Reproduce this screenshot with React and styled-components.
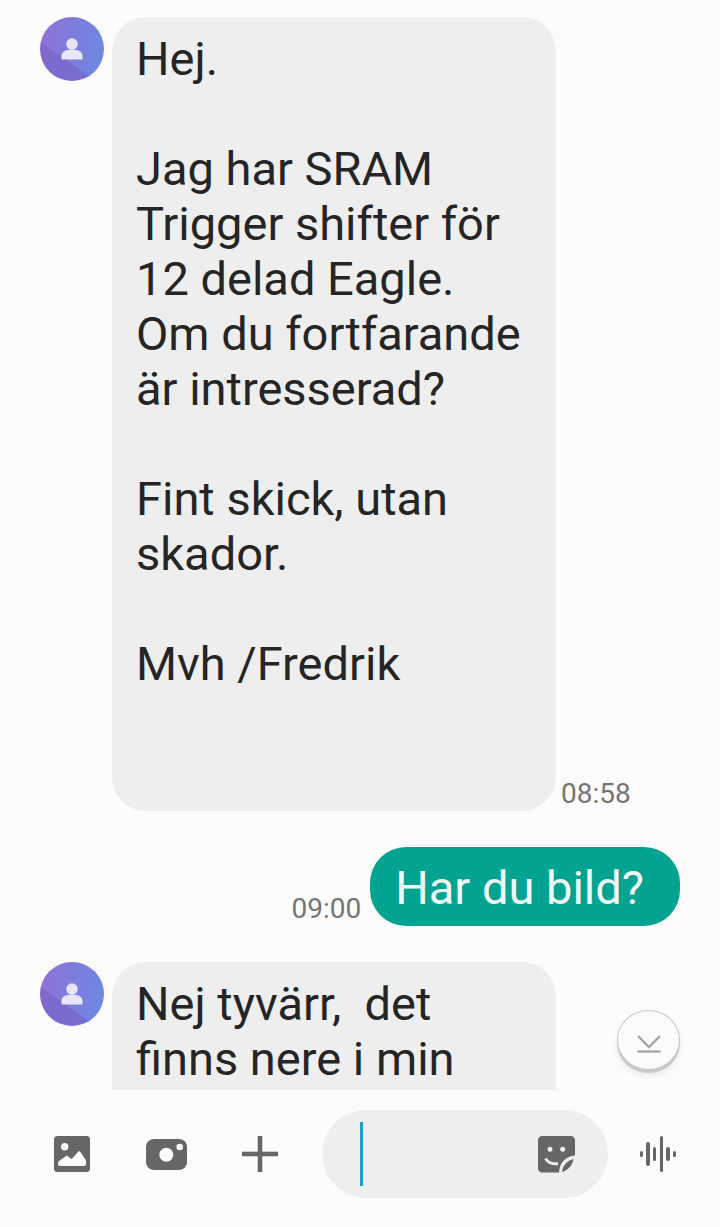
import React from "react";
import styled, { createGlobalStyle } from "styled-components";

const GlobalStyle = createGlobalStyle`
  html, body {
    margin: 0;
    padding: 0;
    background: #fcfcfc;
    font-family: Roboto, "Liberation Sans", sans-serif;
  }
`;

const firstMessage = `Hej.

Jag har SRAM
Trigger shifter för
12 delad Eagle.
Om du fortfarande
är intresserad?

Fint skick, utan
skador.

Mvh /Fredrik`;

const secondMessage = `Nej tyvärr,  det
finns nere i min`;

const App = () => {
  return (
    <Screen>
      <GlobalStyle />
      <MessageList>
        <ReceivedRow>
          <Avatar />
          <ReceivedBubble $minHeight="794px">{firstMessage}</ReceivedBubble>
          <Time>08:58</Time>
        </ReceivedRow>
        <SentRow>
          <SentTime>09:00</SentTime>
          <SentBubble>Har du bild?</SentBubble>
        </SentRow>
        <ReceivedRow>
          <Avatar />
          <ReceivedBubble $minHeight="200px">{secondMessage}</ReceivedBubble>
        </ReceivedRow>
      </MessageList>
      <ScrollDown>
        <svg width="26" height="18" viewBox="0 0 26 18" fill="none" stroke="#a4a4a4" strokeWidth="2.3">
          <path d="M2 1l11 11L24 1" />
          <path d="M1.500 16.500h23" />
        </svg>
      </ScrollDown>
      <Composer>
        <IconSlot>
          <GalleryIcon />
        </IconSlot>
        <IconSlot>
          <CameraIcon />
        </IconSlot>
        <IconSlot>
          <svg width="36" height="36" viewBox="0 0 36 36" fill="#666">
            <rect x="15.700" y="0" width="4.600" height="36" />
            <rect x="0" y="15.700" width="36" height="4.600" />
          </svg>
        </IconSlot>
        <InputPill>
          <Cursor />
          <StickerIcon />
        </InputPill>
        <VoiceSlot>
          <VoiceIcon />
        </VoiceSlot>
      </Composer>
    </Screen>
  );
};

const Avatar = () => (
  <AvatarCircle>
    <svg width="22" height="22" viewBox="0 0 22 22" fill="#e7e5f7">
      <circle cx="11" cy="6" r="5.800" />
      <path d="M.5 21.500v-3.500C.5 13.500 5 11.500 11 11.500s10.500 2 10.500 6.500v3.500z" />
    </svg>
  </AvatarCircle>
);

const GalleryIcon = () => (
  <svg width="36" height="36" viewBox="0 0 36 36">
    <rect width="36" height="36" rx="3.500" fill="#666" />
    <circle cx="10.700" cy="10.700" r="3.700" fill="#fcfcfc" />
    <path
      d="M4 27.500c0-1 .4-1.800 1-2.400l7.700-5.600 5 3.500 6.500-7.300c.6-.6 1.500-.6 2 0l5.800 8.500v3.800c0 1.200-.8 2-2 2H6c-1.200 0-2-.8-2-2.500z"
      fill="#fcfcfc"
    />
  </svg>
);

const CameraIcon = () => (
  <svg width="41" height="31" viewBox="0 0 41 31">
    <rect width="41" height="31" rx="8" fill="#666" />
    <circle cx="20.300" cy="15.800" r="7" fill="#fcfcfc" />
    <circle cx="33.700" cy="8" r="3.300" fill="#fcfcfc" />
  </svg>
);

const StickerIcon = () => (
  <svg width="37" height="37" viewBox="0 0 37 37">
    <path
      d="M4 0h29c2.200 0 4 1.800 4 4v15.500C28 20 21.500 26.500 21 36.500H4c-2.200 0-4-1.800-4-4V4C0 1.800 1.800 0 4 0z"
      fill="#666"
    />
    <circle cx="12" cy="13.300" r="2.500" fill="#eeeeee" />
    <circle cx="24.700" cy="13.300" r="2.500" fill="#eeeeee" />
    <path d="M7.500 22.500c2.500 4 7 6 12.500 5" fill="none" stroke="#eeeeee" strokeWidth="2.800" />
    <path d="M24 36c.5-6 4.500-11 11.500-13-1 6.500-5.500 11-11.500 13z" fill="#666" />
  </svg>
);

const VoiceIcon = () => (
  <VoiceBars>
    {[17, 72, 40, 107, 40, 17].map((height, index) => (
      <VoiceBar key={index} style={{ height: height / 3 }} />
    ))}
  </VoiceBars>
);

const Screen = styled.div`
  position: relative;
  display: flex;
  flex-direction: column;
  width: 720px;
  height: 1227px;
  overflow: hidden;
  background: #fcfcfc;
`;

const MessageList = styled.div`
  display: flex;
  flex-direction: column;
  gap: 36px;
  height: 1090px;
  flex-shrink: 0;
  padding: 17px 40px 0;
  box-sizing: border-box;
  overflow: hidden;
`;

const ReceivedRow = styled.div`
  display: flex;
  align-items: flex-start;
  flex-shrink: 0;
`;

const AvatarCircle = styled.div`
  display: flex;
  align-items: center;
  justify-content: center;
  flex-shrink: 0;
  width: 64px;
  height: 64px;
  margin-right: 8px;
  border-radius: 50%;
  background:
    linear-gradient(35deg, rgba(112, 88, 190, 0.45) 0 36%, rgba(112, 88, 190, 0) 36.500%),
    linear-gradient(100deg, #9270d8 0%, #6a8ae0 100%);
`;

const ReceivedBubble = styled.div`
  box-sizing: border-box;
  width: 444px;
  min-height: ${(props) => props.$minHeight};
  padding: 14px 24px;
  border-radius: 34px;
  background: #eeeeee;
  color: #252525;
  font-size: 47px;
  line-height: 55px;
  white-space: pre-wrap;
`;

const Time = styled.span`
  align-self: flex-end;
  margin-left: 5px;
  color: #757575;
  font-size: 28px;
  line-height: 34px;
`;

const SentRow = styled.div`
  display: flex;
  align-items: flex-end;
  justify-content: flex-end;
  flex-shrink: 0;
`;

const SentTime = styled(Time)`
  margin-left: 0;
  margin-right: 9px;
`;

const SentBubble = styled.div`
  padding: 13px 36px 11px 25px;
  border-radius: 36px;
  background: #02a491;
  color: #effaf8;
  font-size: 47px;
  line-height: 55px;
`;

const ScrollDown = styled.div`
  position: absolute;
  left: 617px;
  top: 1010px;
  display: flex;
  align-items: center;
  justify-content: center;
  box-sizing: border-box;
  width: 63px;
  height: 60px;
  padding-top: 8px;
  border: 1.500px solid #c9c9c9;
  border-radius: 50%;
  background: #fbfbfb;
  box-shadow: 0 3px 0 #c9c9c9, 0 6px 6px rgba(0, 0, 0, 0.08);
`;

const Composer = styled.div`
  display: flex;
  align-items: center;
  height: 137px;
  padding: 20px 15px 29px 25px;
  box-sizing: border-box;
`;

const IconSlot = styled.div`
  display: flex;
  align-items: center;
  justify-content: center;
  width: 94px;
  flex-shrink: 0;
`;

const InputPill = styled.div`
  display: flex;
  align-items: center;
  justify-content: space-between;
  box-sizing: border-box;
  width: 286px;
  height: 88px;
  margin-left: 15px;
  padding: 0 33px 0 38px;
  border-radius: 44px;
  background: #eeeeee;
`;

const Cursor = styled.span`
  width: 3px;
  height: 64px;
  background: #1f9fc9;
`;

const VoiceSlot = styled(IconSlot)`
  margin-left: 3px;
`;

const VoiceBars = styled.div`
  display: flex;
  align-items: center;
  gap: 3.400px;
`;

const VoiceBar = styled.span`
  width: 3.300px;
  border-radius: 2px;
  background: #666;
`;

export default App;
